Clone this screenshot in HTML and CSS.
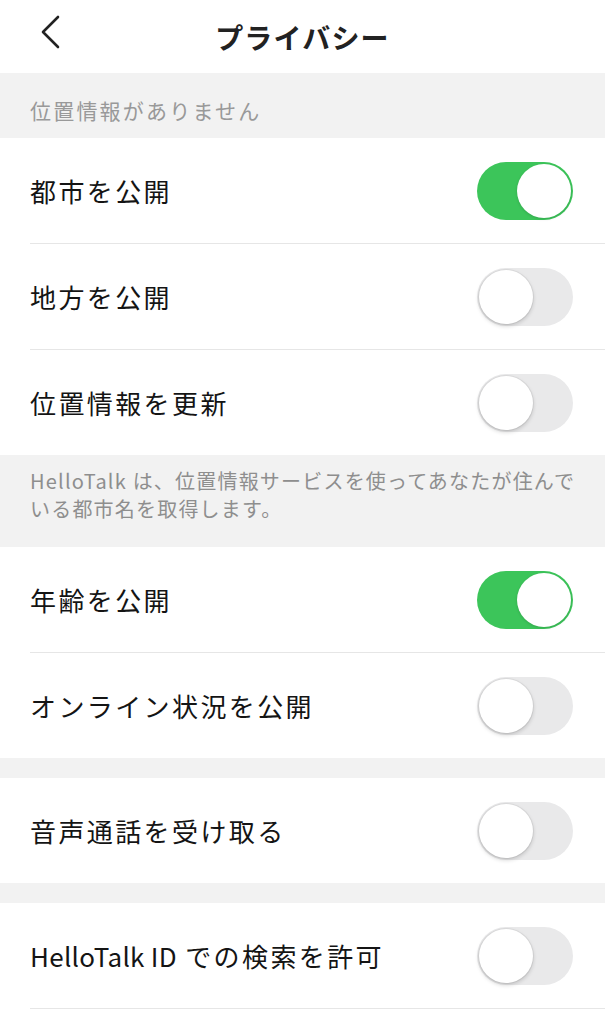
FILE: index.html
```html
<!DOCTYPE html>
<html lang="ja">
<head>
    <meta charset="UTF-8">
    <meta name="viewport" content="width=device-width, initial-scale=1.0">
    <title>プライバシー</title>
    <link rel="stylesheet" href="styles.css">
</head>
<body>
    <div class="header">
        <svg class="back" width="24" height="34" viewBox="0 0 24 34">
            <path d="M20 2 L5 17 L20 32" fill="none" stroke="#222" stroke-width="2.6" stroke-linecap="round" stroke-linejoin="round"/>
        </svg>
        <h1>プライバシー</h1>
    </div>

    <div class="label">位置情報がありません</div>

    <div class="group">
        <div class="row"><span>都市を公開</span><span class="toggle on"></span></div>
        <div class="row"><span>地方を公開</span><span class="toggle"></span></div>
        <div class="row"><span>位置情報を更新</span><span class="toggle"></span></div>
    </div>

    <div class="note">HelloTalk は、位置情報サービスを使ってあなたが住んでいる都市名を取得します。</div>

    <div class="group">
        <div class="row"><span>年齢を公開</span><span class="toggle on"></span></div>
        <div class="row"><span>オンライン状況を公開</span><span class="toggle"></span></div>
    </div>

    <div class="gap"></div>

    <div class="group">
        <div class="row"><span>音声通話を受け取る</span><span class="toggle"></span></div>
    </div>

    <div class="gap"></div>

    <div class="group open">
        <div class="row"><span><span class="latin">HelloTalk ID</span> での検索を許可</span><span class="toggle"></span></div>
    </div>
</body>
</html>
```

FILE: styles.css
```css
body {
    font-family: "Noto Sans CJK JP", "Noto Sans", sans-serif;
    margin: 0;
    padding: 0;
    background-color: white;
    color: #222;
}
.header {
    height: 73px;
    display: flex;
    align-items: center;
    justify-content: center;
    position: relative;
}
.back {
    position: absolute;
    left: 38px;
    top: 15px;
}
h1 {
    margin: 0;
    font-size: 28px;
    font-weight: 700;
    letter-spacing: 1.2px;
    color: #222;
}
.label {
    background-color: #f2f2f2;
    height: 65px;
    box-sizing: border-box;
    padding: 22px 30px 0;
    font-size: 21px;
    letter-spacing: 2.2px;
    color: #999;
}
.note {
    background-color: #f2f2f2;
    height: 92px;
    box-sizing: border-box;
    padding: 12px 20px 0 30px;
    font-size: 20px;
    line-height: 28px;
    letter-spacing: 1.2px;
    color: #8e8e8e;
}
.latin {
    letter-spacing: 0.3px;
}
.gap {
    background-color: #f2f2f2;
    height: 20px;
}
.row {
    height: 105px;
    margin-left: 30px;
    padding-right: 32px;
    border-bottom: 1px solid #e6e6e6;
    display: flex;
    align-items: center;
    justify-content: space-between;
    font-size: 26px;
    font-weight: 400;
    letter-spacing: 2.4px;
    color: #141414;
}
.group .row:last-child {
    border-bottom: none;
}
.group.open .row:last-child {
    border-bottom: 1px solid #e6e6e6;
}
.toggle {
    width: 96px;
    height: 58px;
    border-radius: 29px;
    background-color: #e9e9ea;
    position: relative;
}
.toggle::after {
    content: "";
    position: absolute;
    left: 2px;
    top: 2px;
    width: 54px;
    height: 54px;
    border-radius: 50%;
    background: white;
    box-shadow: 0 2px 4px rgba(0, 0, 0, 0.18), 0 0 0 1px rgba(0, 0, 0, 0.05);
}
.toggle.on {
    background-color: #3cc55a;
}
.toggle.on::after {
    left: 40px;
    box-shadow: 0 1px 3px rgba(0, 0, 0, 0.15);
}
```
